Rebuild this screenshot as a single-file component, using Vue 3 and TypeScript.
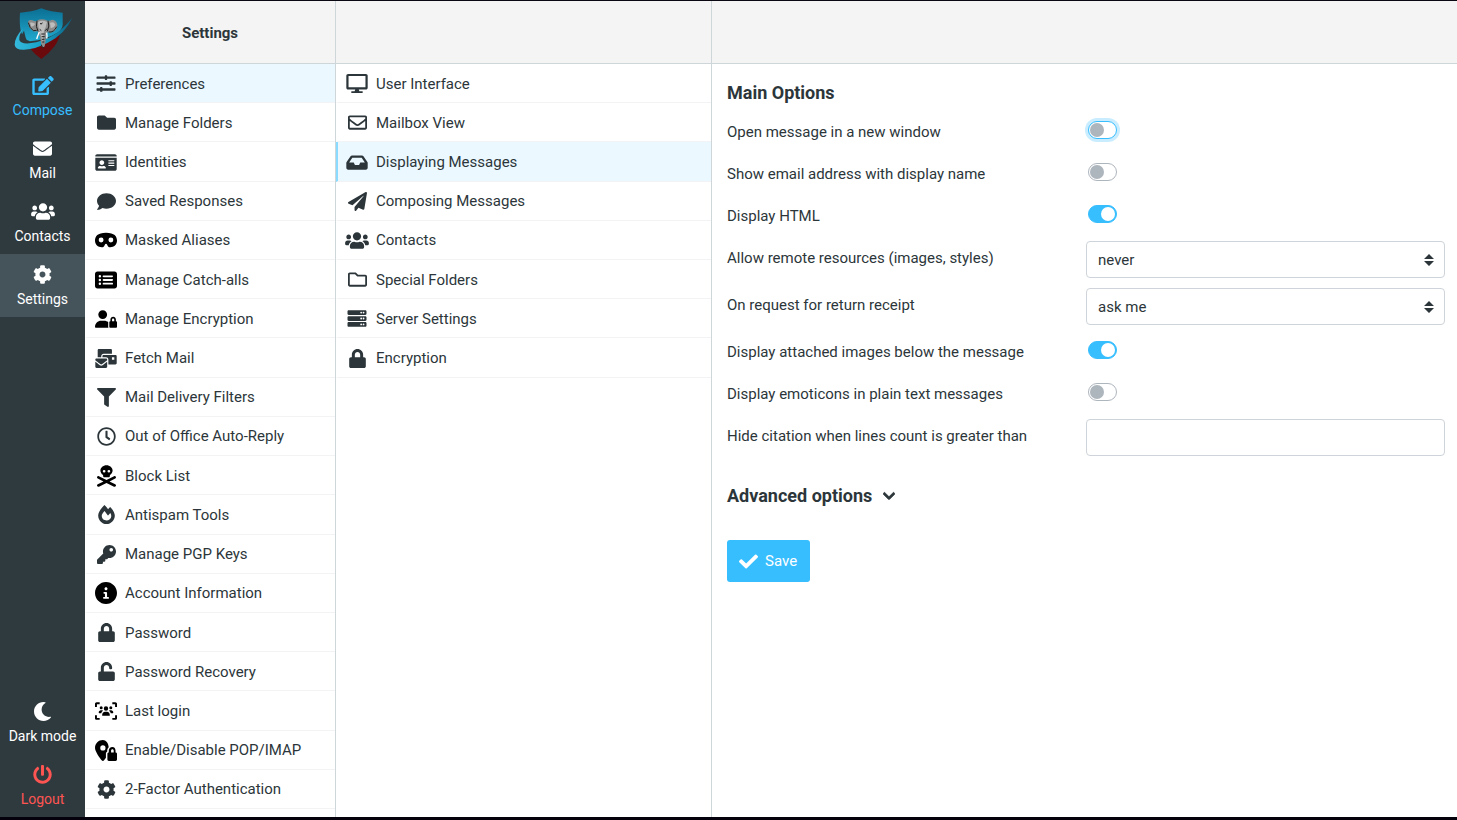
<script setup lang="ts">
import { ref } from 'vue'

interface Icon {
  w: number
  h: number
  box: string
  d: string
}

interface Entry {
  label: string
  icon: string
  dark?: boolean
}

const cog =
  'M487.4 315.7l-42.6-24.6c4.3-23.2 4.3-47 0-70.2l42.6-24.6c4.9-2.8 7.1-8.6 5.5-14-11.1-35.6-30-67.8-54.7-94.6-3.8-4.1-10-5.1-14.8-2.3L380.8 110c-17.9-15.4-38.5-27.3-60.8-35.1V25.8c0-5.6-3.9-10.5-9.4-11.7-36.7-8.2-74.3-7.8-109.2 0-5.5 1.2-9.4 6.1-9.4 11.7V75c-22.2 7.9-42.8 19.8-60.8 35.1L88.7 85.5c-4.9-2.8-11-1.9-14.8 2.3-24.7 26.7-43.6 58.9-54.7 94.6-1.7 5.4.6 11.2 5.5 14L67.3 221c-4.3 23.2-4.3 47 0 70.2l-42.6 24.6c-4.9 2.8-7.1 8.6-5.5 14 11.1 35.6 30 67.8 54.7 94.6 3.8 4.1 10 5.1 14.8 2.3l42.6-24.6c17.9 15.4 38.5 27.3 60.8 35.1v49.2c0 5.6 3.9 10.5 9.4 11.7 36.7 8.2 74.3 7.8 109.2 0 5.5-1.2 9.4-6.1 9.4-11.7v-49.2c22.2-7.9 42.8-19.8 60.8-35.1l42.6 24.6c4.9 2.8 11 1.9 14.8-2.3 24.7-26.7 43.6-58.9 54.7-94.6 1.5-5.5-.7-11.3-5.6-14.1zM256 336c-44.1 0-80-35.9-80-80s35.9-80 80-80 80 35.9 80 80-35.9 80-80 80z'
const users =
  'M96 224c35.3 0 64-28.7 64-64s-28.7-64-64-64-64 28.7-64 64 28.7 64 64 64zm448 0c35.3 0 64-28.7 64-64s-28.7-64-64-64-64 28.7-64 64 28.7 64 64 64zm32 32h-64c-17.6 0-33.5 7.1-45.1 18.6 40.3 22.1 68.9 62 75.1 109.4h66c17.7 0 32-14.3 32-32v-32c0-35.3-28.7-64-64-64zm-256 0c61.9 0 112-50.1 112-112S381.9 32 320 32 208 82.1 208 144s50.1 112 112 112zm76.8 32h-8.3c-20.8 10-43.9 16-68.5 16s-47.6-6-68.5-16h-8.3C179.6 288 128 339.6 128 403.2V432c0 26.5 21.5 48 48 48h288c26.5 0 48-21.5 48-48v-28.8c0-63.6-51.6-115.2-115.2-115.2zm-223.7-13.4C161.5 263.1 145.6 256 128 256H64c-35.3 0-64 28.7-64 64v32c0 17.7 14.3 32 32 32h65.9c6.3-47.4 34.9-87.3 75.2-109.4z'

const icons: Record<string, Icon> = {
  edit: { w: 22, h: 19, box: '0 0 576 512', d: 'M402.6 83.2l90.2 90.2c3.8 3.8 3.8 10 0 13.8L274.4 405.6l-92.8 10.3c-12.4 1.4-22.9-9.1-21.5-21.5l10.3-92.8L388.8 83.2c3.8-3.8 10-3.8 13.8 0zm162-22.9l-48.8-48.8c-15.2-15.2-39.9-15.2-55.2 0l-35.4 35.4c-3.8 3.8-3.8 10 0 13.8l90.2 90.2c3.8 3.8 10 3.8 13.8 0l35.4-35.4c15.2-15.3 15.2-40 0-55.2zM384 346.2V448H64V128h229.8c3.2 0 6.2-1.3 8.5-3.5l40-40c7.6-7.6 2.2-20.5-8.5-20.5H48C21.5 64 0 85.5 0 112v352c0 26.5 21.5 48 48 48h352c26.5 0 48-21.5 48-48V306.2c0-10.7-12.9-16-20.5-8.5l-40 40c-2.2 2.3-3.5 5.3-3.5 8.5z' },
  mail: { w: 19, h: 19, box: '0 0 512 512', d: 'M502.3 190.8c3.9-3.1 9.7-.2 9.7 4.7V400c0 26.5-21.5 48-48 48H48c-26.5 0-48-21.5-48-48V195.6c0-5 5.7-7.8 9.7-4.7 22.4 17.4 52.1 39.5 154.1 113.6 21.1 15.4 56.7 47.8 92.2 47.6 35.7.3 72-32.8 92.3-47.6 102-74.1 131.6-96.3 154-113.7zM256 320c23.2.4 56.6-29.2 73.4-41.4 132.7-96.3 142.8-104.7 173.4-128.7 5.8-4.5 9.2-11.5 9.2-18.9v-19c0-26.5-21.5-48-48-48H48c-26.5 0-48 21.5-48 48v19c0 7.4 3.4 14.3 9.2 18.9 30.6 23.9 40.7 32.4 173.4 128.7 16.8 12.2 50.2 41.8 73.4 41.4z' },
  users: { w: 24, h: 19, box: '0 0 640 512', d: users },
  cog: { w: 19, h: 19, box: '0 0 512 512', d: cog },
  moon: { w: 19, h: 19, box: '0 0 512 512', d: 'M283.211 512c78.962 0 151.079-35.925 198.857-94.792 7.068-8.708-.639-21.43-11.562-19.35-124.203 23.654-238.262-71.576-238.262-196.954 0-72.222 38.662-138.635 101.498-174.394 9.686-5.512 7.25-20.197-3.756-22.23A258.156 258.156 0 0 0 283.211 0c-141.309 0-256 114.511-256 256 0 141.309 114.511 256 256 256z' },
  power: { w: 19, h: 19, box: '0 0 512 512', d: 'M400 54.1c63 45 104 118.6 104 201.9 0 136.8-110.8 247.7-247.5 248C120 504.3 8.2 393 8 256.4 7.9 173.1 48.9 99.3 111.8 54.2c11.7-8.3 28-4.8 35 7.7L162.6 90c5.9 10.5 3.1 23.8-6.6 31-41.5 30.8-68 79.6-68 134.9-.1 92.3 74.5 168.1 168 168.1 91.6 0 168.6-74.2 168-169.1-.3-51.8-24.7-101.8-68.1-134-9.7-7.2-12.4-20.5-6.5-30.9l15.8-28.1c7-12.4 23.2-16.1 34.8-7.8zM296 264V24c0-13.3-10.7-24-24-24h-32c-13.3 0-24 10.7-24 24v240c0 13.3 10.7 24 24 24h32c13.3 0 24-10.7 24-24z' },
  sliders: { w: 20, h: 19, box: '0 0 512 512', d: 'M496 384H160v-16c0-8.8-7.2-16-16-16h-32c-8.8 0-16 7.2-16 16v16H16c-8.8 0-16 7.2-16 16v32c0 8.8 7.2 16 16 16h80v16c0 8.8 7.2 16 16 16h32c8.8 0 16-7.2 16-16v-16h336c8.8 0 16-7.2 16-16v-32c0-8.8-7.2-16-16-16zm0-160h-80v-16c0-8.8-7.2-16-16-16h-32c-8.8 0-16 7.2-16 16v16H16c-8.8 0-16 7.2-16 16v32c0 8.8 7.2 16 16 16h336v16c0 8.8 7.2 16 16 16h32c8.8 0 16-7.2 16-16v-16h80c8.8 0 16-7.2 16-16v-32c0-8.8-7.2-16-16-16zm0-160H288V48c0-8.8-7.2-16-16-16h-32c-8.8 0-16 7.2-16 16v16H16C7.2 64 0 71.2 0 80v32c0 8.8 7.2 16 16 16h208v16c0 8.8 7.2 16 16 16h32c8.8 0 16-7.2 16-16v-16h208c8.8 0 16-7.2 16-16V80c0-8.8-7.2-16-16-16z' },
  folder: { w: 19, h: 19, box: '0 0 512 512', d: 'M464 128H272l-64-64H48C21.49 64 0 85.49 0 112v288c0 26.51 21.49 48 48 48h416c26.51 0 48-21.49 48-48V176c0-26.51-21.49-48-48-48z' },
  idCard: { w: 22, h: 19, box: '0 0 576 512', d: 'M528 32H48C21.5 32 0 53.5 0 80v16h576V80c0-26.5-21.5-48-48-48zM0 432c0 26.5 21.5 48 48 48h480c26.5 0 48-21.5 48-48V128H0v304zm352-232c0-4.4 3.6-8 8-8h144c4.4 0 8 3.6 8 8v16c0 4.4-3.6 8-8 8H360c-4.4 0-8-3.6-8-8v-16zm0 64c0-4.4 3.6-8 8-8h144c4.4 0 8 3.6 8 8v16c0 4.4-3.6 8-8 8H360c-4.4 0-8-3.6-8-8v-16zm0 64c0-4.4 3.6-8 8-8h144c4.4 0 8 3.6 8 8v16c0 4.4-3.6 8-8 8H360c-4.4 0-8-3.6-8-8v-16zM176 192c35.3 0 64 28.7 64 64s-28.7 64-64 64-64-28.7-64-64 28.7-64 64-64zM67.1 396.2C75.5 370.5 99.6 352 128 352h8.2c12.3 5.1 25.7 8 39.8 8s27.6-2.9 39.8-8h8.2c28.4 0 52.5 18.5 60.9 44.2 3.2 9.9-5.2 19.8-15.6 19.8H82.7c-10.4 0-18.8-10-15.6-19.8z' },
  comment: { w: 19, h: 19, box: '0 0 512 512', d: 'M256 32C114.6 32 0 125.1 0 240c0 49.6 21.4 95 57 130.7C44.5 421.1 2.7 466 2.2 466.5c-2.2 2.3-2.8 5.7-1.5 8.7S4.8 480 8 480c66.3 0 116-31.8 140.6-51.4 32.7 12.3 69 19.4 107.4 19.4 141.4 0 256-93.1 256-208S397.4 32 256 32z' },
  mask: { w: 22, h: 20, box: '0 0 576 512', d: 'M288 64C64 64 0 160 0 272S80 448 176 448h8.4c24.2 0 46.4-13.7 57.2-35.4l23.2-46.3c4.4-8.8 13.3-14.3 23.2-14.3s18.8 5.5 23.2 14.3l23.2 46.3c10.8 21.7 33 35.4 57.2 35.4H400c96 0 176-64 176-176S512 64 288 64zM96 256a64 64 0 1 1 128 0 64 64 0 1 1-128 0zm320-64a64 64 0 1 1 0 128 64 64 0 1 1 0-128z' },
  list: { w: 22, h: 20, box: '0 0 576 512', d: 'M0 96C0 60.700 28.700 32 64 32H512c35.300 0 64 28.700 64 64V416c0 35.300-28.700 64-64 64H64c-35.300 0-64-28.700-64-64V96zM128 288a32 32 0 1 0 0-64 32 32 0 1 0 0 64zm32-128a32 32 0 1 0-64 0 32 32 0 1 0 64 0zM128 384a32 32 0 1 0 0-64 32 32 0 1 0 0 64zM224 136c-13.300 0-24 10.700-24 24s10.700 24 24 24H448c13.300 0 24-10.700 24-24s-10.700-24-24-24zm0 96c-13.300 0-24 10.700-24 24s10.700 24 24 24H448c13.300 0 24-10.700 24-24s-10.700-24-24-24zm0 96c-13.300 0-24 10.700-24 24s10.700 24 24 24H448c13.300 0 24-10.700 24-24s-10.700-24-24-24z' },
  userLock: { w: 22, h: 18, box: '0 0 640 512', d: 'M224 256A128 128 0 1 0 224 0a128 128 0 1 0 0 256zm-45.700 48C79.800 304 0 383.800 0 482.300C0 498.700 13.300 512 29.700 512H392.600c-5.400-9.400-8.600-20.300-8.600-32V352c0-2.100.1-4.200.3-6.300c-31-26-71-41.700-114.600-41.700H178.300zM528 240c17.700 0 32 14.300 32 32v48H496V272c0-17.700 14.300-32 32-32zm-80 32v48c-17.700 0-32 14.300-32 32V480c0 17.700 14.300 32 32 32H608c17.700 0 32-14.300 32-32V352c0-17.700-14.300-32-32-32V272c0-44.200-35.800-80-80-80s-80 35.800-80 80z' },
  mailBulk: { w: 22, h: 19, box: '0 0 576 512', d: 'M160 448c-25.6 0-51.2-22.4-64-32-64-44.800-83.200-60.800-96-70.400V480c0 17.670 14.330 32 32 32h256c17.670 0 32-14.330 32-32V345.600c-12.800 9.600-32 25.600-96 70.400-12.800 9.600-38.400 32-64 32zm128-192H32c-17.670 0-32 14.330-32 32v16c25.600 19.200 22.400 19.200 115.200 86.400 9.600 6.400 28.800 25.600 44.800 25.600s35.200-19.200 44.800-25.600c92.800-67.200 89.600-67.200 115.200-86.400V288c0-17.670-14.330-32-32-32zm256-96H224c-17.670 0-32 14.330-32 32v32h96c33.210 0 60.590 25.420 63.710 57.820l.29-.22V416h192c17.670 0 32-14.330 32-32V192c0-17.670-14.330-32-32-32zm-32 128h-64v-64h64v64zm-352-96c0-35.290 28.710-64 64-64h224V32c0-17.670-14.330-32-32-32H96C78.330 0 64 14.330 64 32v192h96v-32z' },
  filter: { w: 19, h: 19, box: '0 0 512 512', d: 'M487.976 0H24.028C2.710 0-8.047 25.866 7.058 40.971L192 225.941V432c0 7.831 3.821 15.170 10.237 19.662l80 55.980C298.020 518.690 320 507.493 320 487.980V225.941l184.947-184.970C520.021 25.896 509.338 0 487.976 0z' },
  clock: { w: 19, h: 19, box: '0 0 512 512', d: 'M256 8C119 8 8 119 8 256s111 248 248 248 248-111 248-248S393 8 256 8zm0 448c-110.500 0-200-89.500-200-200S145.500 56 256 56s200 89.500 200 200-89.500 200-200 200zm61.800-104.400l-84.900-61.700c-3.100-2.300-4.900-5.900-4.900-9.700V116c0-6.600 5.400-12 12-12h32c6.600 0 12 5.400 12 12v141.700l66.800 48.600c5.400 3.900 6.500 11.400 2.600 16.800L334.600 349c-3.900 5.300-11.400 6.500-16.800 2.600z' },
  skull: { w: 19, h: 22, box: '0 0 448 512', d: 'M368 128c0 44.400-25.400 83.500-64 106.400V256c0 17.700-14.300 32-32 32H176c-17.700 0-32-14.300-32-32V234.400c-38.600-23-64-62.100-64-106.400C80 57.300 144.500 0 224 0s144 57.300 144 128zM168 176a32 32 0 1 0 0-64 32 32 0 1 0 0 64zm144-32a32 32 0 1 0-64 0 32 32 0 1 0 64 0zM3.400 273.700c7.900-15.800 27.100-22.200 42.900-14.300L224 348.200l177.700-88.800c15.800-7.900 35-1.500 42.900 14.300s1.500 35-14.300 42.900L295.600 384l134.800 67.400c15.800 7.900 22.200 27.100 14.300 42.900s-27.100 22.200-42.900 14.300L224 419.800 46.300 508.600c-15.800 7.900-35 1.500-42.900-14.300s-1.500-35 14.300-42.900L152.400 384 17.700 316.600C1.900 308.700-4.500 289.500 3.400 273.700z' },
  fire: { w: 17, h: 19, box: '0 0 448 512', d: 'M323.560 51.200c-20.800 19.300-39.580 39.590-56.220 59.970C240.080 73.620 206.280 35.530 168 0 69.740 91.170 0 209.960 0 281.600 0 408.850 100.290 512 224 512s224-103.150 224-230.400c0-53.270-51.980-163.140-124.440-230.400zm-19.470 340.650C282.430 407.010 255.720 416 226.860 416 154.710 416 96 368.260 96 290.750c0-38.610 24.310-72.630 72.790-130.750 6.930 7.980 98.830 125.340 98.830 125.340l58.630-66.880c4.140 6.850 7.910 13.550 11.270 19.970 27.350 52.190 15.810 118.970-33.430 153.420z' },
  key: { w: 19, h: 19, box: '0 0 512 512', d: 'M512 176.001C512 273.203 433.202 352 336 352c-11.220 0-22.190-1.062-32.827-3.069l-24.012 27.014A23.999 23.999 0 0 1 261.223 384H224v40c0 13.255-10.745 24-24 24h-40v40c0 13.255-10.745 24-24 24H24c-13.255 0-24-10.745-24-24v-78.059c0-6.365 2.529-12.470 7.029-16.971l161.802-161.802C163.108 213.814 160 195.271 160 176 160 78.798 238.797.001 335.999 0 433.488-.001 512 78.511 512 176.001zM336 128c0 26.510 21.490 48 48 48s48-21.490 48-48-21.490-48-48-48-48 21.490-48 48z' },
  info: { w: 22, h: 22, box: '8 8 496 496', d: 'M256 8C119.043 8 8 119.083 8 256c0 136.997 111.043 248 248 248s248-111.003 248-248C504 119.083 392.957 8 256 8zm0 116c19 0 34 15 34 34s-15 34-34 34-34-15-34-34 15-34 34-34zm58 260H206c-9 0-16-7-16-16v-8c0-9 7-16 16-16h26v-72h-18c-9 0-16-7-16-16v-8c0-9 7-16 16-16h42c13 0 24 11 24 24v88h26c9 0 16 7 16 16v8c0 9-1 16-8 16z' },
  lock: { w: 17, h: 19, box: '0 0 448 512', d: 'M400 224h-24v-72C376 68.200 307.800 0 224 0S72 68.200 72 152v72H48c-26.500 0-48 21.500-48 48v192c0 26.500 21.500 48 48 48h352c26.500 0 48-21.500 48-48V272c0-26.500-21.500-48-48-48zm-104 0H152v-72c0-39.700 32.300-72 72-72s72 32.300 72 72v72z' },
  unlock: { w: 17, h: 19, box: '0 0 448 512', d: 'M400 256H152V152.900c0-39.600 31.700-72.500 71.300-72.900 40-.4 72.700 32.100 72.700 72v16c0 13.300 10.700 24 24 24h32c13.300 0 24-10.700 24-24v-16C376 68 307.500-.3 223.500 0 139.500.3 72 69.500 72 153.500V256H48c-26.500 0-48 21.500-48 48v160c0 26.500 21.500 48 48 48h352c26.500 0 48-21.500 48-48V304c0-26.500-21.500-48-48-48z' },
  viewfinder: { w: 22, h: 18, box: '0 0 640 512', d: 'M48 0h88v56H56v80H0V48C0 21 21 0 48 0zM504 0h88c27 0 48 21 48 48v88h-56V56h-80zM0 376h56v80h80v56H48c-27 0-48-21-48-48zM584 376h56v88c0 27-21 48-48 48h-88v-56h80zM320 120a64 64 0 1 1 0 128 64 64 0 1 1 0-128zM180 120a44 44 0 1 1 0 88 44 44 0 1 1 0-88zM460 120a44 44 0 1 1 0 88 44 44 0 1 1 0-88zM208 376c0-60 36-100 84-100h56c48 0 84 40 84 100 0 9-7 16-16 16H224c-9 0-16-7-16-16zM108 300c0-36 28-64 64-64h24c14 0 26 4 36 11-25 16-44 42-51 73h-57c-9 0-16-9-16-20zM532 300c0-36-28-64-64-64h-24c-14 0-26 4-36 11 25 16 44 42 51 73h57c9 0 16-9 16-20z' },
  pinLock: { w: 22, h: 21, box: '0 0 536 512', d: 'M192 0C86 0 0 86 0 192c0 87 117 243 168 307 13 16 36 16 48 0 14-18 32-41 50-66V336c0-24 13-44 32-55v-25c0-32 14-61 36-82C325 75 266 0 192 0zm0 128a64 64 0 1 1 0 128 64 64 0 1 1 0-128zM424 168c-50 0-88 40-88 88v48c-20 0-34 15-34 34v140c0 19 15 34 34 34h166c19 0 34-15 34-34V338c0-19-15-34-34-34h-2v-48c0-48-26-88-76-88zm0 56c18 0 32 14 32 32v48h-64v-48c0-18 14-32 32-32z' },
  desktop: { w: 22, h: 19, box: '0 0 576 512', d: 'M528 0H48C21.500 0 0 21.500 0 48v320c0 26.500 21.500 48 48 48h192l-16 48h-72c-13.300 0-24 10.700-24 24s10.700 24 24 24h272c13.300 0 24-10.700 24-24s-10.700-24-24-24h-72l-16-48h192c26.500 0 48-21.500 48-48V48c0-26.500-21.500-48-48-48zm-12 360H60V56h456z' },
  mailOutline: { w: 19, h: 19, box: '0 0 512 512', d: 'M464 64H48C21.490 64 0 85.490 0 112v288c0 26.510 21.490 48 48 48h416c26.510 0 48-21.490 48-48V112c0-26.510-21.490-48-48-48zm0 48v40.805c-22.422 18.259-58.168 46.651-134.587 106.490-16.841 13.247-50.201 45.072-73.413 44.701-23.208.375-56.579-31.459-73.413-44.701C106.180 199.465 70.425 171.067 48 152.805V112h416zM48 400V214.398c22.914 18.251 55.409 43.862 104.938 82.646 21.857 17.205 60.134 55.186 103.062 54.955 42.717.231 80.509-37.199 103.053-54.947 49.528-38.783 82.032-64.401 104.947-82.653V400H48z' },
  inbox: { w: 22, h: 19, box: '0 0 576 512', d: 'M567.938 243.908L462.250 85.374A48.003 48.003 0 0 0 422.311 64H153.689a48 48 0 0 0-39.938 21.374L8.062 243.908A47.994 47.994 0 0 0 0 270.533V400c0 26.510 21.490 48 48 48h480c26.510 0 48-21.490 48-48V270.533a47.994 47.994 0 0 0-8.062-26.625zM162.252 128h251.497l85.333 128H376l-32 64H232l-32-64H76.918l85.334-128z' },
  plane: { w: 19, h: 19, box: '0 0 512 512', d: 'M476 3.200L12.500 270.600c-18.100 10.400-15.800 35.600 2.200 43.200L121 358.400l287.300-253.200c5.500-4.900 13.300 2.600 8.600 8.300L176 407v80.500c0 23.600 28.500 32.900 42.500 15.800L282 426l124.600 52.200c14.200 6 30.400-2.900 33-18.200l72-432C515 7.800 493.300-6.800 476 3.200z' },
  folderOutline: { w: 19, h: 19, box: '0 0 512 512', d: 'M464 128H272l-54.630-54.630c-6-6-14.140-9.370-22.630-9.370H48C21.490 64 0 85.490 0 112v288c0 26.510 21.490 48 48 48h416c26.510 0 48-21.490 48-48V176c0-26.510-21.490-48-48-48zm0 272H48V112h140.120l54.630 54.630c6 6 14.140 9.370 22.630 9.370H464v224z' },
  server: { w: 20, h: 19, box: '0 0 512 512', d: 'M480 160H32c-17.673 0-32-14.327-32-32V64c0-17.673 14.327-32 32-32h448c17.673 0 32 14.327 32 32v64c0 17.673-14.327 32-32 32zM432 72a24 24 0 1 0 0 48 24 24 0 1 0 0-48zm-64 0a24 24 0 1 0 0 48 24 24 0 1 0 0-48zM480 320H32c-17.673 0-32-14.327-32-32v-64c0-17.673 14.327-32 32-32h448c17.673 0 32 14.327 32 32v64c0 17.673-14.327 32-32 32zM432 232a24 24 0 1 0 0 48 24 24 0 1 0 0-48zm-64 0a24 24 0 1 0 0 48 24 24 0 1 0 0-48zM480 480H32c-17.673 0-32-14.327-32-32v-64c0-17.673 14.327-32 32-32h448c17.673 0 32 14.327 32 32v64c0 17.673-14.327 32-32 32zM432 392a24 24 0 1 0 0 48 24 24 0 1 0 0-48zm-64 0a24 24 0 1 0 0 48 24 24 0 1 0 0-48z' },
}

const mainTasks: Entry[] = [
  { label: 'Compose', icon: 'edit' },
  { label: 'Mail', icon: 'mail' },
  { label: 'Contacts', icon: 'users' },
  { label: 'Settings', icon: 'cog' },
]

const sections: Entry[] = [
  { label: 'Preferences', icon: 'sliders' },
  { label: 'Manage Folders', icon: 'folder' },
  { label: 'Identities', icon: 'idCard' },
  { label: 'Saved Responses', icon: 'comment' },
  { label: 'Masked Aliases', icon: 'mask', dark: true },
  { label: 'Manage Catch-alls', icon: 'list', dark: true },
  { label: 'Manage Encryption', icon: 'userLock', dark: true },
  { label: 'Fetch Mail', icon: 'mailBulk' },
  { label: 'Mail Delivery Filters', icon: 'filter' },
  { label: 'Out of Office Auto-Reply', icon: 'clock' },
  { label: 'Block List', icon: 'skull', dark: true },
  { label: 'Antispam Tools', icon: 'fire' },
  { label: 'Manage PGP Keys', icon: 'key' },
  { label: 'Account Information', icon: 'info', dark: true },
  { label: 'Password', icon: 'lock' },
  { label: 'Password Recovery', icon: 'unlock' },
  { label: 'Last login', icon: 'viewfinder', dark: true },
  { label: 'Enable/Disable POP/IMAP', icon: 'pinLock', dark: true },
  { label: '2-Factor Authentication', icon: 'cog' },
]

const preferences: Entry[] = [
  { label: 'User Interface', icon: 'desktop' },
  { label: 'Mailbox View', icon: 'mailOutline' },
  { label: 'Displaying Messages', icon: 'inbox' },
  { label: 'Composing Messages', icon: 'plane' },
  { label: 'Contacts', icon: 'users' },
  { label: 'Special Folders', icon: 'folderOutline' },
  { label: 'Server Settings', icon: 'server' },
  { label: 'Encryption', icon: 'lock' },
]

const section = ref('Preferences')
const preference = ref('Displaying Messages')

const newWindow = ref(false)
const showEmail = ref(false)
const displayHtml = ref(true)
const remote = ref('never')
const receipt = ref('ask me')
const inlineImages = ref(true)
const emoticons = ref(false)
const citation = ref('')
</script>

<template>
  <div class="page">
    <nav class="taskbar" aria-label="Tasks">
      <svg class="logo" width="85" height="54" viewBox="0 18 255 162" aria-hidden="true">
        <defs>
          <linearGradient id="shieldBlue" x1="0" y1="0" x2="0" y2="1">
            <stop offset="0" stop-color="#0b6f93" />
            <stop offset="1" stop-color="#21a9cf" />
          </linearGradient>
          <linearGradient id="orbit" x1="0" y1="0" x2="1" y2="0">
            <stop offset="0" stop-color="#35b9dc" />
            <stop offset="0.5" stop-color="#15a0c6" />
            <stop offset="1" stop-color="#0c5f80" />
          </linearGradient>
        </defs>
        <path fill="url(#shieldBlue)" d="M60 38Q95 36 124 25Q153 36 188 38V74Q186 90 172 98Q140 118 90 124Q70 118 62 92Q58 70 60 38z" />
        <path fill="#6a0a0c" d="M182 93Q178 118 164 138Q146 162 124 177Q104 164 90 145Q140 138 182 93z" />
        <path fill="url(#orbit)" d="M217 53Q196 100 146 127Q108 148 72 149Q46 150 44 134Q44 112 70 84Q56 106 58 120Q62 132 88 130Q130 126 166 102Q192 84 217 53z" />
        <path fill="#2f3a3f" d="M72 92Q62 106 62 118Q64 128 82 127Q76 112 72 92z" />
        <path fill="#8c8c8c" d="M84 66Q86 58 97 61Q108 66 111 62Q124 54 143 62Q150 63 156 59Q170 60 172 74Q172 90 158 96Q148 101 144 94L138 108Q137 124 135 133Q135 142 129 142Q123 142 124 133L120 110L112 92Q104 98 96 90Q84 82 84 66z" />
        <path fill="#bdbdbd" d="M114 66Q126 58 141 66L137 82L132 92L128 126L122 104L116 84zM90 68Q100 66 106 72Q100 80 94 80zM150 68Q162 64 166 74Q160 86 152 84z" />
        <path fill="none" stroke="#202020" stroke-width="3" d="M85 68Q88 84 100 92L110 91M111 62Q106 80 114 94M144 62Q150 78 142 94M170 80Q162 98 146 96M119 88L124 92M136 92L141 86M120 70Q124 76 127 68M124 102H134M125 110H134M126 118H133M127 126H133M124 134Q124 142 131 143" />
        <path fill="none" stroke="#fff" stroke-width="4" d="M118 96Q112 110 110 117M140 98Q142 108 140 116" />
      </svg>
      <button
        v-for="task in mainTasks"
        :key="task.label"
        type="button"
        class="task"
        :class="{ compose: task.icon === 'edit', selected: task.label === 'Settings' }"
      >
        <svg :width="icons[task.icon].w" :height="icons[task.icon].h" :viewBox="icons[task.icon].box" aria-hidden="true">
          <path :d="icons[task.icon].d" fill-rule="evenodd" />
        </svg>
        <span>{{ task.label }}</span>
      </button>
      <div class="spacer"></div>
      <button type="button" class="task">
        <svg width="19" height="19" :viewBox="icons.moon.box" aria-hidden="true"><path :d="icons.moon.d" /></svg>
        <span>Dark mode</span>
      </button>
      <button type="button" class="task logout">
        <svg width="19" height="19" :viewBox="icons.power.box" aria-hidden="true"><path :d="icons.power.d" /></svg>
        <span>Logout</span>
      </button>
    </nav>

    <section class="column sections">
      <header class="bar"><h1>Settings</h1></header>
      <ul class="list">
        <li v-for="item in sections" :key="item.label">
          <a href="#" :class="{ current: item.label === section }" @click.prevent="section = item.label">
            <span class="icon" :class="{ dark: item.dark }">
              <svg :width="icons[item.icon].w" :height="icons[item.icon].h" :viewBox="icons[item.icon].box" aria-hidden="true">
                <path :d="icons[item.icon].d" fill-rule="evenodd" />
              </svg>
            </span>
            <span>{{ item.label }}</span>
          </a>
        </li>
      </ul>
    </section>

    <section class="column preferences">
      <header class="bar"></header>
      <ul class="list">
        <li v-for="item in preferences" :key="item.label">
          <a href="#" :class="{ current: item.label === preference }" @click.prevent="preference = item.label">
            <span class="icon">
              <svg :width="icons[item.icon].w" :height="icons[item.icon].h" :viewBox="icons[item.icon].box" aria-hidden="true">
                <path :d="icons[item.icon].d" fill-rule="evenodd" />
              </svg>
            </span>
            <span>{{ item.label }}</span>
          </a>
        </li>
      </ul>
    </section>

    <main class="content">
      <header class="bar"></header>
      <form class="form" @submit.prevent>
        <h2>Main Options</h2>
        <div class="row">
          <label for="new-window">Open message in a new window</label>
          <input id="new-window" v-model="newWindow" type="checkbox" class="switch focused" />
        </div>
        <div class="row">
          <label for="show-email">Show email address with display name</label>
          <input id="show-email" v-model="showEmail" type="checkbox" class="switch" />
        </div>
        <div class="row">
          <label for="display-html">Display HTML</label>
          <input id="display-html" v-model="displayHtml" type="checkbox" class="switch" />
        </div>
        <div class="row">
          <label for="remote">Allow remote resources (images, styles)</label>
          <div class="picker">
            <select id="remote" v-model="remote">
              <option>never</option>
              <option>from my contacts</option>
              <option>always</option>
            </select>
            <svg width="10" height="12" viewBox="0 0 10 12" aria-hidden="true"><path d="M0 5L5 0L10 5zM0 7H10L5 12z" /></svg>
          </div>
        </div>
        <div class="row">
          <label for="receipt">On request for return receipt</label>
          <div class="picker">
            <select id="receipt" v-model="receipt">
              <option>ask me</option>
              <option>always send</option>
              <option>ignore</option>
            </select>
            <svg width="10" height="12" viewBox="0 0 10 12" aria-hidden="true"><path d="M0 5L5 0L10 5zM0 7H10L5 12z" /></svg>
          </div>
        </div>
        <div class="row">
          <label for="inline-images">Display attached images below the message</label>
          <input id="inline-images" v-model="inlineImages" type="checkbox" class="switch" />
        </div>
        <div class="row">
          <label for="emoticons">Display emoticons in plain text messages</label>
          <input id="emoticons" v-model="emoticons" type="checkbox" class="switch" />
        </div>
        <div class="row">
          <label for="citation">Hide citation when lines count is greater than</label>
          <input id="citation" v-model="citation" type="text" class="text" />
        </div>
        <h2 class="advanced">
          <button type="button">
            Advanced options
            <svg width="12" height="14" viewBox="0 0 448 512" aria-hidden="true">
              <path stroke="currentColor" stroke-width="32" d="M207.029 381.476L12.686 187.132c-9.373-9.373-9.373-24.569 0-33.941l22.667-22.667c9.357-9.357 24.522-9.375 33.901-.04L224 284.505l154.745-154.021c9.379-9.335 24.544-9.317 33.901.04l22.667 22.667c9.373 9.373 9.373 24.569 0 33.941L240.971 381.476c-9.373 9.372-24.569 9.372-33.942 0z" />
            </svg>
          </button>
        </h2>
        <button type="submit" class="save">
          <svg width="19" height="19" viewBox="0 0 512 512" aria-hidden="true">
            <path d="M173.898 439.404l-166.4-166.4c-9.997-9.997-9.997-26.206 0-36.204l36.203-36.204c9.997-9.998 26.207-9.998 36.204 0L192 312.690 432.095 72.596c9.997-9.997 26.207-9.997 36.204 0l36.203 36.204c9.997 9.997 9.997 26.206 0 36.204l-294.4 294.401c-9.998 9.997-26.207 9.997-36.204-.001z" />
          </svg>
          <span>Save</span>
        </button>
      </form>
    </main>
  </div>
</template>

<style>
body {
  margin: 0;
}
</style>

<style scoped>
.page {
  box-sizing: border-box;
  display: flex;
  height: 100vh;
  border-top: 1px solid #0b0710;
  border-bottom: 3px solid #04000c;
  background: #fff;
  color: #2c363a;
  font-family: Roboto, "Liberation Sans", sans-serif;
  font-size: 15px;
  line-height: 20px;
  overflow: hidden;
}

.page *,
.page *::before {
  box-sizing: border-box;
}

svg {
  display: block;
  flex: none;
  fill: currentColor;
}

button,
input,
select {
  margin: 0;
  border: 0;
  color: inherit;
  font: inherit;
}

h1,
h2,
ul {
  margin: 0;
  padding: 0;
}

.taskbar {
  display: flex;
  flex: none;
  flex-direction: column;
  align-items: center;
  width: 85px;
  background: #2f3a3f;
}

.logo {
  margin: 5px 0;
}

.task {
  display: flex;
  flex-direction: column;
  align-items: center;
  gap: 5px;
  width: 100%;
  height: 63px;
  padding: 11px 0 0;
  background: none;
  color: #fff;
  font-size: 14px;
}

.task.compose {
  color: #37beff;
}

.task.selected {
  background: #45545b;
}

.task.logout {
  color: #ff5552;
}

.spacer {
  flex: 1;
}

.column {
  display: flex;
  flex: none;
  flex-direction: column;
  border-right: 1px solid #ced6d9;
}

.sections {
  width: 251px;
}

.preferences {
  width: 376px;
}

.bar {
  display: flex;
  flex: none;
  align-items: center;
  justify-content: center;
  height: 63px;
  padding-top: 2px;
  border-bottom: 1px solid #ced6d9;
  background: #f4f4f4;
}

h1 {
  font-size: 15px;
  font-weight: 700;
}

.list {
  display: grid;
  flex: 1;
  grid-template-rows: repeat(19, minmax(39px, 1fr));
  padding-bottom: 8px;
  list-style: none;
}

.list li {
  display: grid;
}

.list a {
  display: flex;
  align-items: center;
  gap: 7px;
  padding: 1px 0 0 7px;
  border-bottom: 1px solid #f1f3f4;
  border-left: 2px solid transparent;
  color: inherit;
  text-decoration: none;
}

.list .current {
  background: #ebf8ff;
}

.preferences .current {
  border-left-color: #8bdaff;
}

.sections .current {
  border-left-color: #ebf8ff;
}

.icon {
  display: flex;
  flex: none;
  justify-content: center;
  width: 24px;
}

.icon.dark {
  color: #000;
}

.content {
  flex: 1;
  min-width: 0;
}

.form {
  padding: 18px 12px 18px 15px;
}

h2 {
  margin-bottom: 7px;
  font-size: 18px;
  font-weight: 700;
  line-height: 22px;
}

.row {
  display: grid;
  grid-template-columns: 1fr 1fr;
  align-items: start;
  padding: 4px 0;
}

label {
  padding: 7px 0;
}

.switch {
  width: 29px;
  height: 18px;
  margin: 6px 0 0 2px;
  padding: 1px;
  border: 1px solid #adb5bd;
  border-radius: 9px;
  background: #fff;
  appearance: none;
}

.switch::before {
  display: block;
  width: 14px;
  height: 14px;
  border-radius: 50%;
  background: #adb5bd;
  content: "";
}

.switch:checked {
  border-color: #37beff;
  background: #37beff;
}

.switch:checked::before {
  margin-left: auto;
  background: #fff;
}

.switch.focused {
  border-color: #37beff;
  box-shadow: 0 0 0 3px #c9edff;
}

.picker {
  display: grid;
  align-items: center;
  margin-bottom: 2px;
}

.picker > * {
  grid-area: 1 / 1;
}

.picker svg {
  justify-self: end;
  margin-right: 11px;
  pointer-events: none;
}

select,
.text {
  width: 100%;
  height: 37px;
  padding: 0 11px;
  border: 1px solid #ced4da;
  border-radius: 4px;
  background: #fff;
  appearance: none;
}

.advanced {
  margin: 25px 0 33px;
}

.advanced button {
  display: flex;
  align-items: center;
  gap: 11px;
  padding: 0;
  background: none;
}

.save {
  display: flex;
  align-items: center;
  gap: 7px;
  height: 42px;
  padding: 0 13px 0 12px;
  border-radius: 3px;
  background: #37beff;
  color: #fff;
}
</style>
